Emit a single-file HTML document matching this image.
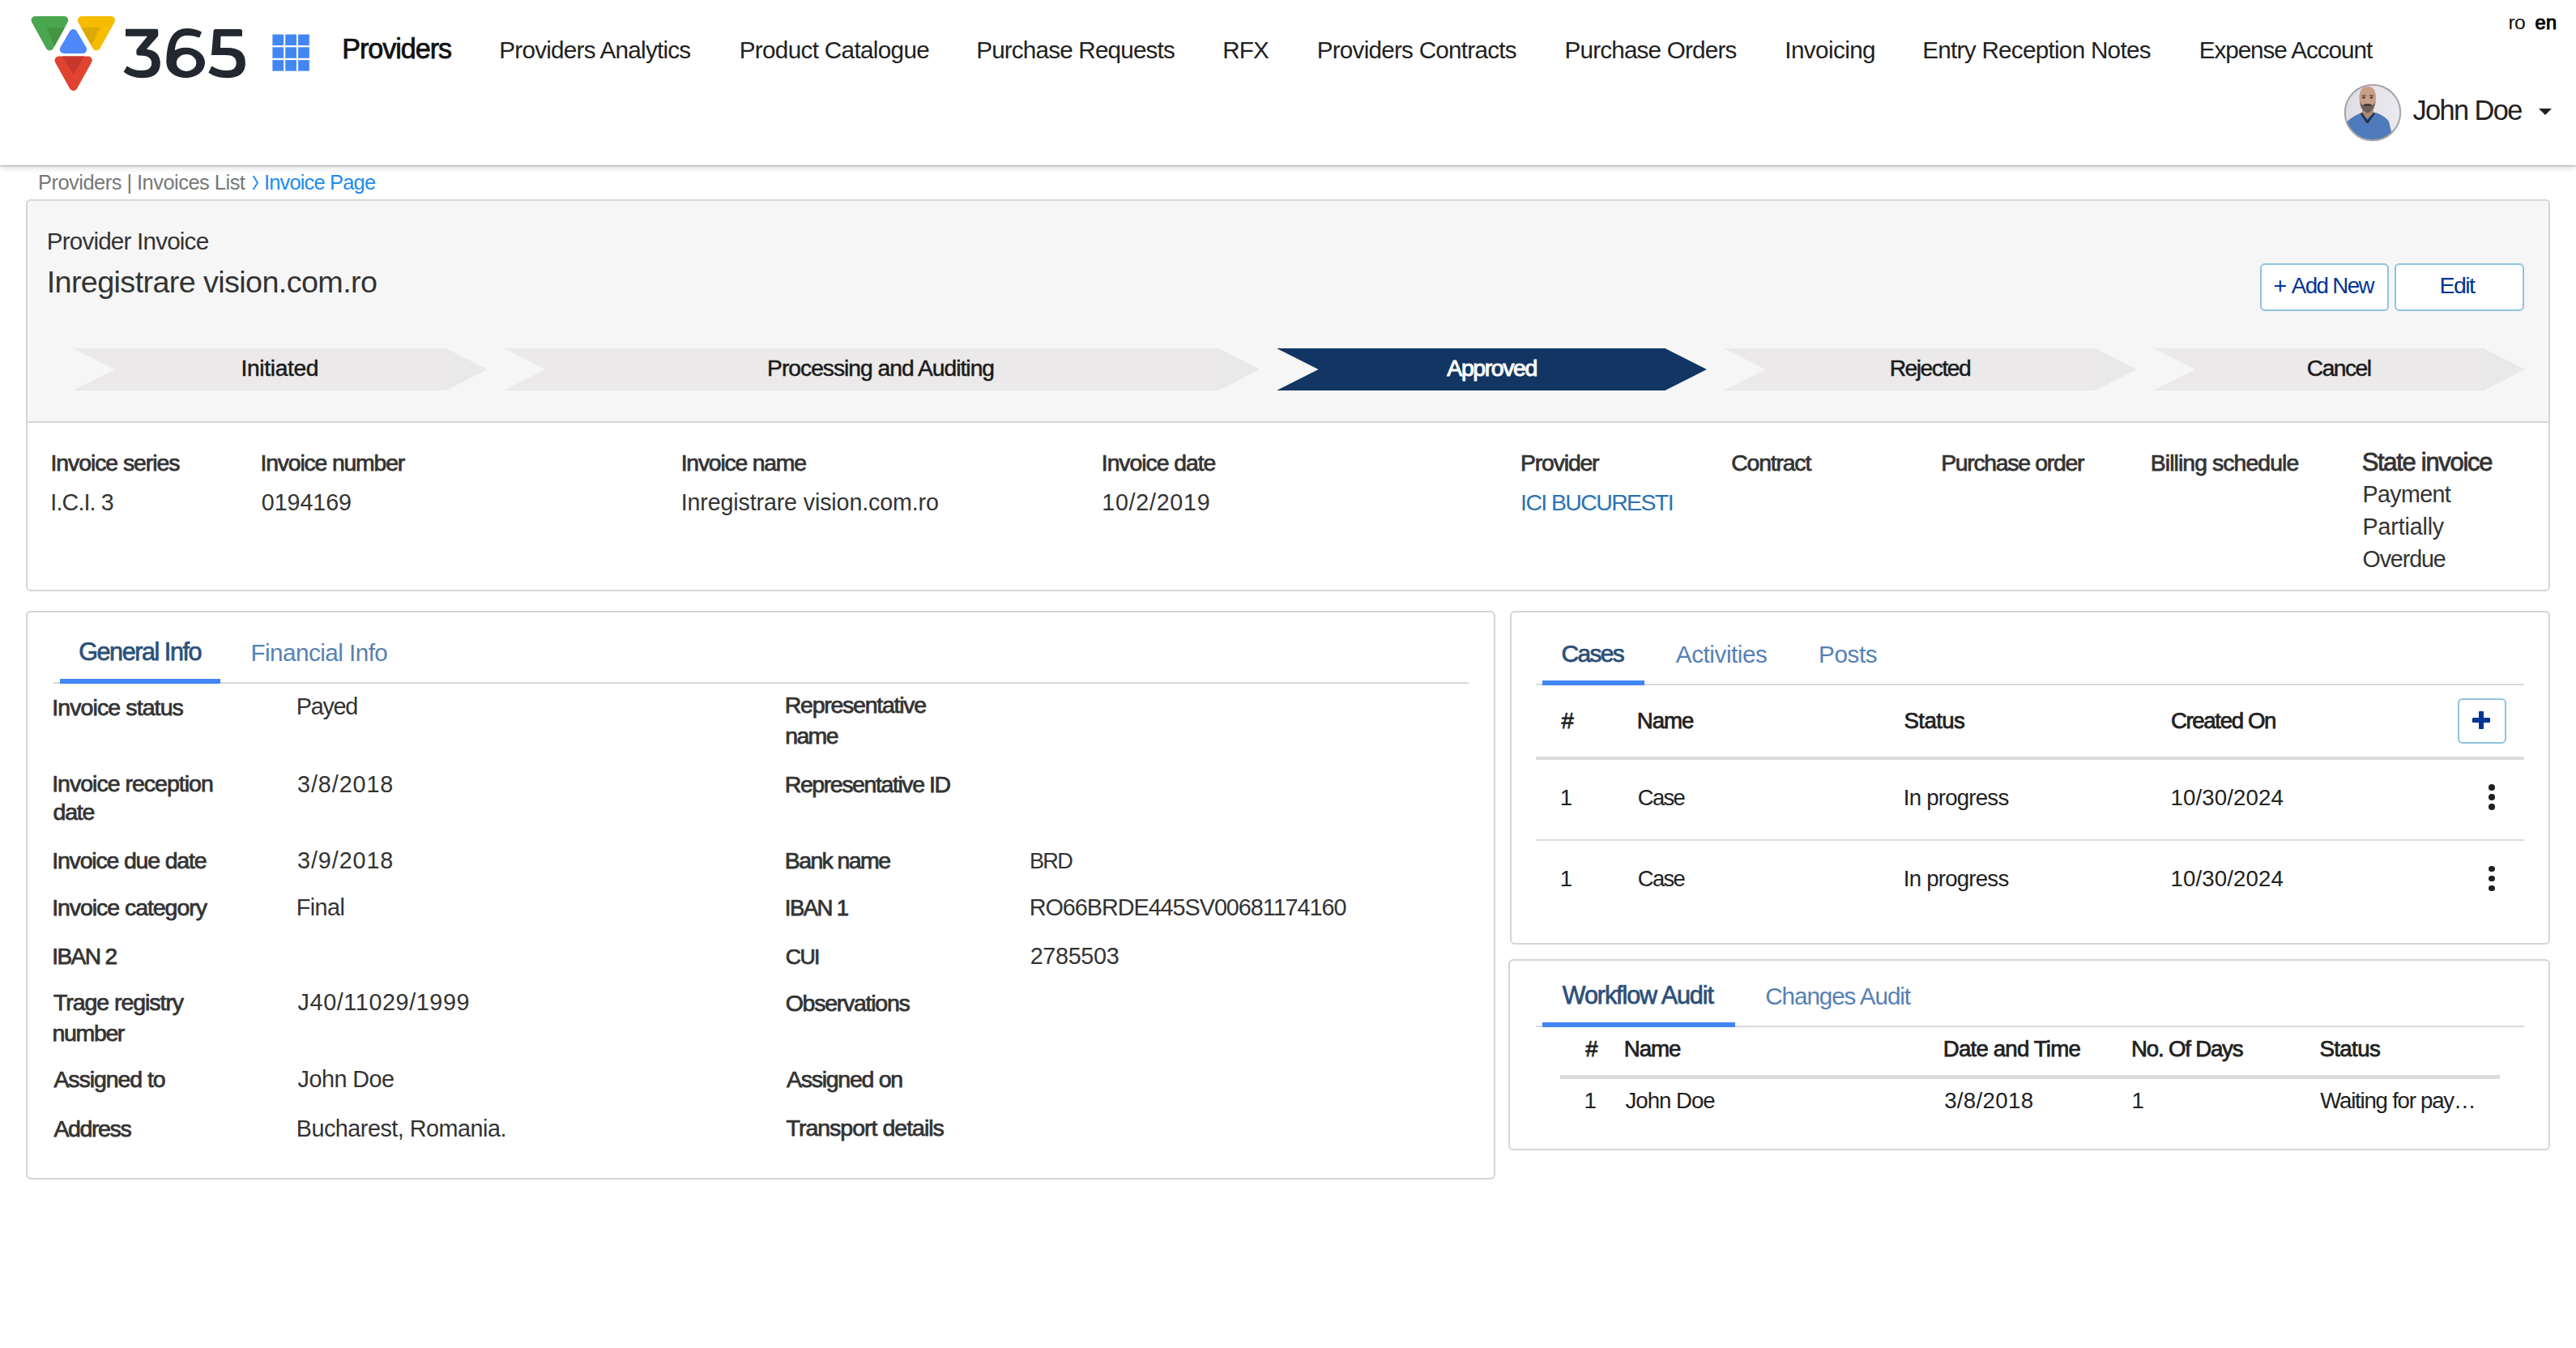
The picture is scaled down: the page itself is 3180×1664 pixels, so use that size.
<!DOCTYPE html>
<html lang="en"><head><meta charset="utf-8"><title>Invoice Page</title>
<style>
html,body{margin:0;padding:0;background:#fff}
body{width:3180px;height:1664px;position:relative;overflow:hidden;font-family:"Liberation Sans",sans-serif}
.t{position:absolute;white-space:pre;z-index:3}
</style></head><body>
<div id="hdr" style="position:absolute;left:0;top:0;width:3180px;height:204px;background:#fff;box-shadow:0 1px 2px rgba(0,0,0,.27),0 3px 8px rgba(0,0,0,.14);z-index:1"></div>
<svg style="position:absolute;left:0;top:0;z-index:2" width="320" height="120" viewBox="0 0 320 120">
<g stroke-linejoin="round">
<polygon points="43.6,25 79.2,25 61.4,57.3" fill="#4aa74f" stroke="#4aa74f" stroke-width="10"/>
<polygon points="100.9,25 137,25 119,57.3" fill="#f5bc00" stroke="#f5bc00" stroke-width="10"/>
<path d="M57.7,34 L80,34 L67.6,56.5 Q67,57.3 66.3,56 Z" fill="#43963f"/>
<path d="M100.2,34 L122,34 Q123.5,34.5 122.8,36 L112.6,55.8 Z" fill="#dfa903"/>
<polygon points="90.4,41 102.2,61 78.8,61" fill="#4f88f8" stroke="#4f88f8" stroke-width="10"/>
<polygon points="72.5,74.6 108.7,74.6 90.6,107" fill="#e0432f" stroke="#e0432f" stroke-width="10"/>
<path d="M76.7,69.6 L104,69.6 L91.3,90.4 Q90.4,91.6 89.5,90.4 Z" fill="#c8372e"/>
</g>
<g fill="#23272f">
<path d="M155,35.7 H193 Q195.3,35.7 195.3,38 V43.3 Q195.3,44.3 194.5,45.2 L180.8,60.7 Q197.8,62.5 197.8,78.2 Q197.8,96.2 175,96.2 Q162,96.2 152.6,88.7 L156.8,81.4 Q164.5,87 174.5,87 Q187.2,87 187.2,77.8 Q187.2,68.4 172.5,68.4 H171 Q168.4,68.4 168.4,65.5 V62.8 Q168.4,61.3 169.5,60.1 L182,44.8 H155 Z"/>
<path d="M249,39.4 Q241,34.9 231,34.9 C212,34.9 205.5,52 205.5,77.5 L218,77.5 Q216,70 215.8,63.8 Q216.5,43.8 231.5,43.8 Q239,43.8 246.2,46.6 Z"/>
<path fill-rule="evenodd" d="M205.5,77.5 A23.75,18.7 0 1 0 253,77.5 A23.75,18.7 0 1 0 205.5,77.5 Z M217.9,77.5 A12.2,10.4 0 1 0 242.3,77.5 A12.2,10.4 0 1 0 217.9,77.5 Z"/>
<path d="M263.6,38.2 Q263.8,36 266,36 H297 Q299,36 299,38.5 V44.8 H272.5 L272,59.1 H281 Q302.9,59.1 302.9,78 Q302.9,96.2 280,96.2 Q267,96.2 257.4,89.7 L261.3,81.4 Q270,87.1 280,87.1 Q291.7,87.1 291.7,77.6 Q291.7,67.9 279,67.9 H261 Z"/>
</g>
</svg>
<svg style="position:absolute;left:0;top:0;z-index:2" width="400" height="100"><rect x="336.40" y="42.50" width="13.7" height="13.5" fill="#4286f4"/><rect x="336.40" y="58.30" width="13.7" height="13.5" fill="#4286f4"/><rect x="336.40" y="74.10" width="13.7" height="13.5" fill="#4286f4"/><rect x="352.25" y="42.50" width="13.7" height="13.5" fill="#4286f4"/><rect x="352.25" y="58.30" width="13.7" height="13.5" fill="#4286f4"/><rect x="352.25" y="74.10" width="13.7" height="13.5" fill="#4286f4"/><rect x="368.10" y="42.50" width="13.7" height="13.5" fill="#4286f4"/><rect x="368.10" y="58.30" width="13.7" height="13.5" fill="#4286f4"/><rect x="368.10" y="74.10" width="13.7" height="13.5" fill="#4286f4"/></svg>
<svg style="position:absolute;left:2890px;top:100px;z-index:2" width="80" height="80" viewBox="2890 100 80 80">
<defs><clipPath id="av"><circle cx="2929" cy="139" r="34"/></clipPath>
<linearGradient id="avbg" x1="0" x2="1" y1="0" y2="0"><stop offset="0" stop-color="#dedde6"/><stop offset="1" stop-color="#ebebf0"/></linearGradient></defs>
<g clip-path="url(#av)">
<rect x="2890" y="100" width="80" height="80" fill="url(#avbg)"/>
<path d="M2917,134 L2929,134 L2931,141 L2922,150 L2915,141 Z" fill="#b08a74"/>
<path d="M2896,152 Q2900,146 2913,140 L2922,146 L2933,139 Q2944,143 2949,150 L2953,166 L2952,180 L2893,180 Z" fill="#4f7bbc"/>
<path d="M2913.5,140 L2921.5,152 L2923.5,152 L2932.5,139.5 L2930,139 L2922.5,148.5 L2916,139 Z" fill="#223152"/>
<path d="M2912.5,121 Q2912.5,107 2922.8,106.8 Q2933,107 2933,121 Q2933,128 2931,133 Q2928,139 2922.8,139 Q2917.5,139 2914.5,133 Q2912.5,128 2912.5,121 Z" fill="#c79e86"/>
<path d="M2913.3,125 Q2914,137 2922.8,139.5 Q2931.5,137 2932.3,125 Q2930,131 2927.5,129 Q2922.8,127 2918,129 Q2915.5,131 2913.3,125 Z" fill="#6a615c"/>
<path d="M2918,129.3 Q2922.8,127.3 2927.6,129.3 L2927,131 Q2922.8,129.8 2918.6,131 Z" fill="#3a302c"/>
<ellipse cx="2918" cy="120.6" rx="2" ry="1.1" fill="#3b2f2a"/>
<ellipse cx="2927.4" cy="120.6" rx="2" ry="1.1" fill="#3b2f2a"/>
<path d="M2915.5,118.2 L2920.5,117.8 M2925,117.8 L2930,118.2" stroke="#5a463c" stroke-width="1.2"/>
</g>
<circle cx="2929" cy="139" r="34.2" fill="none" stroke="#a3a3a3" stroke-width="2"/>
</svg>
<svg style="position:absolute;left:3130px;top:128px;z-index:2" width="25" height="20" viewBox="3130 128 25 20"><polygon points="3134,134 3150,134 3142,142" fill="#212121"/></svg>
<svg style="position:absolute;left:305px;top:210px" width="20" height="30" viewBox="305 210 20 30"><polyline points="313,217.8 318,225.6 313,233.4" fill="none" stroke="#1d8cf0" stroke-width="1.9" stroke-linecap="round" stroke-linejoin="round"/></svg>
<div style="position:absolute;left:32px;top:246px;width:3112px;height:480px;border:2px solid #d5d5d5;border-radius:6px;background:linear-gradient(#f6f6f6 0,#f6f6f6 272px,#d5d5d5 272px,#d5d5d5 274px,#fff 274px)"></div>
<div style="position:absolute;left:2790px;top:325px;width:155px;height:55px;border:2px solid #8fc3df;border-radius:6px;background:#fff"></div>
<div style="position:absolute;left:2956px;top:325px;width:156px;height:55px;border:2px solid #8fc3df;border-radius:6px;background:#fff"></div>
<svg style="position:absolute;left:0;top:0" width="3180" height="500"><polygon points="90,430 550.1,430 601.6,456 550.1,482 90,482 141.5,456" fill="#ebe9ea"/><polygon points="550.1,430 601.6,456 550.1,482" fill="#e9e9e9"/><polygon points="622,430 1503.5,430 1555,456 1503.5,482 622,482 673.5,456" fill="#ebe9ea"/><polygon points="1503.5,430 1555,456 1503.5,482" fill="#e9e9e9"/><polygon points="1576,430 2055.5,430 2107,456 2055.5,482 1576,482 1627.5,456" fill="#133563"/><polygon points="2128,430 2585.9,430 2637.4,456 2585.9,482 2128,482 2179.5,456" fill="#ebe9ea"/><polygon points="2585.9,430 2637.4,456 2585.9,482" fill="#e9e9e9"/><polygon points="2658.4,430 3065.5,430 3117,456 3065.5,482 2658.4,482 2709.9,456" fill="#ebe9ea"/><polygon points="3065.5,430 3117,456 3065.5,482" fill="#e9e9e9"/></svg>
<div style="position:absolute;left:32px;top:754px;width:1810px;height:698px;border:2px solid #d5d5d5;border-radius:6px;background:#fff"></div>
<div style="position:absolute;left:1864px;top:754px;width:1280px;height:408px;border:2px solid #d5d5d5;border-radius:6px;background:#fff"></div>
<div style="position:absolute;left:1862px;top:1184px;width:1282px;height:232px;border:2px solid #d5d5d5;border-radius:6px;background:#fff"></div>
<div style="position:absolute;left:66px;top:842px;width:1747px;height:2px;background:#d9d9d9"></div>
<div style="position:absolute;left:74px;top:838px;width:198px;height:6px;background:#4285f4"></div>
<div style="position:absolute;left:1896px;top:844px;width:1220px;height:2px;background:#d9d9d9"></div>
<div style="position:absolute;left:1904px;top:840px;width:126px;height:6px;background:#4285f4"></div>
<div style="position:absolute;left:1896px;top:1266px;width:1220px;height:2px;background:#d9d9d9"></div>
<div style="position:absolute;left:1904px;top:1262px;width:238px;height:6px;background:#4285f4"></div>
<div style="position:absolute;left:1896px;top:934px;width:1220px;height:4px;background:#dcdcdc"></div>
<div style="position:absolute;left:1896px;top:1036px;width:1220px;height:2px;background:#dcdcdc"></div>
<div style="position:absolute;left:3034px;top:862px;width:56px;height:52px;border:2px solid #8fc3df;border-radius:6px;background:#fff"></div>
<div style="position:absolute;left:3052px;top:886px;width:22px;height:5.8px;border-radius:1px;background:#003594"></div>
<div style="position:absolute;left:3060.1px;top:878px;width:5.8px;height:22px;border-radius:1px;background:#003594"></div>
<div style="position:absolute;left:3072.15px;top:968.20px;width:7.7px;height:7.6px;border-radius:50%;background:#212121"></div>
<div style="position:absolute;left:3072.15px;top:980.20px;width:7.7px;height:7.6px;border-radius:50%;background:#212121"></div>
<div style="position:absolute;left:3072.15px;top:992.20px;width:7.7px;height:7.6px;border-radius:50%;background:#212121"></div>
<div style="position:absolute;left:3072.15px;top:1068.50px;width:7.7px;height:7.6px;border-radius:50%;background:#212121"></div>
<div style="position:absolute;left:3072.15px;top:1080.50px;width:7.7px;height:7.6px;border-radius:50%;background:#212121"></div>
<div style="position:absolute;left:3072.15px;top:1092.50px;width:7.7px;height:7.6px;border-radius:50%;background:#212121"></div>
<div style="position:absolute;left:1926px;top:1326.5px;width:1160px;height:5px;background:#dcdcdc"></div>
<div class="t" style="left:422.33px;top:43.01px;font-size:34.16px;line-height:34.16px;letter-spacing:-1.066px;color:#111111;-webkit-text-stroke:0.75px #111111;">Providers</div>
<div class="t" style="left:616.28px;top:47.31px;font-size:29.65px;line-height:29.65px;letter-spacing:-0.749px;color:#212121;">Providers Analytics</div>
<div class="t" style="left:912.68px;top:47.31px;font-size:29.65px;line-height:29.65px;letter-spacing:-0.656px;color:#212121;">Product Catalogue</div>
<div class="t" style="left:1205.18px;top:47.31px;font-size:29.65px;line-height:29.65px;letter-spacing:-0.814px;color:#212121;">Purchase Requests</div>
<div class="t" style="left:1509.18px;top:47.31px;font-size:29.65px;line-height:29.65px;letter-spacing:-0.784px;color:#212121;">RFX</div>
<div class="t" style="left:1625.68px;top:47.31px;font-size:29.65px;line-height:29.65px;letter-spacing:-0.745px;color:#212121;">Providers Contracts</div>
<div class="t" style="left:1931.48px;top:47.31px;font-size:29.65px;line-height:29.65px;letter-spacing:-0.798px;color:#212121;">Purchase Orders</div>
<div class="t" style="left:2203.28px;top:47.31px;font-size:29.65px;line-height:29.65px;letter-spacing:-0.581px;color:#212121;">Invoicing</div>
<div class="t" style="left:2373.28px;top:47.31px;font-size:29.65px;line-height:29.65px;letter-spacing:-0.716px;color:#212121;">Entry Reception Notes</div>
<div class="t" style="left:2714.68px;top:47.31px;font-size:29.65px;line-height:29.65px;letter-spacing:-1.039px;color:#212121;">Expense Account</div>
<div class="t" style="left:3096.46px;top:15.91px;font-size:24.71px;line-height:24.71px;letter-spacing:-0.725px;color:#111111;">ro</div>
<div class="t" style="left:3129.56px;top:16.90px;font-size:23.55px;line-height:23.55px;letter-spacing:0.367px;color:#000000;-webkit-text-stroke:1.0px #000000;">en</div>
<div class="t" style="left:2978.46px;top:118.50px;font-size:34.37px;line-height:34.37px;letter-spacing:-1.600px;color:#212121;">John Doe</div>
<div class="t" style="left:47.01px;top:213.30px;font-size:25.44px;line-height:25.44px;letter-spacing:-0.510px;color:#777777;">Providers | Invoices List</div>
<div class="t" style="left:326.01px;top:213.30px;font-size:25.44px;line-height:25.44px;letter-spacing:-0.822px;color:#1d8cf0;">Invoice Page</div>
<div class="t" style="left:57.68px;top:283.31px;font-size:29.65px;line-height:29.65px;letter-spacing:-0.805px;color:#333333;">Provider Invoice</div>
<div class="t" style="left:57.65px;top:329.51px;font-size:37.79px;line-height:37.79px;letter-spacing:-0.630px;color:#333333;">Inregistrare vision.com.ro</div>
<div class="t" style="left:2806.56px;top:338.42px;font-size:28.49px;line-height:28.49px;letter-spacing:0.000px;color:#003594;">+</div>
<div class="t" style="left:2828.80px;top:339.41px;font-size:27.67px;line-height:27.67px;letter-spacing:-1.600px;color:#003594;">Add New</div>
<div class="t" style="left:3011.47px;top:338.42px;font-size:28.49px;line-height:28.49px;letter-spacing:-1.554px;color:#003594;">Edit</div>
<div class="t" style="left:297.47px;top:440.20px;font-size:28.20px;line-height:28.20px;letter-spacing:-0.340px;color:#1a1a1a;-webkit-text-stroke:0.5px #1a1a1a;">Initiated</div>
<div class="t" style="left:947.10px;top:440.31px;font-size:28.20px;line-height:28.20px;letter-spacing:-0.978px;color:#1a1a1a;-webkit-text-stroke:0.5px #1a1a1a;">Processing and Auditing</div>
<div class="t" style="left:1786.32px;top:440.21px;font-size:28.49px;line-height:28.49px;letter-spacing:-1.427px;color:#ffffff;-webkit-text-stroke:1.0px #ffffff;">Approved</div>
<div class="t" style="left:2332.75px;top:440.11px;font-size:28.20px;line-height:28.20px;letter-spacing:-1.486px;color:#1a1a1a;-webkit-text-stroke:0.5px #1a1a1a;">Rejected</div>
<div class="t" style="left:2847.85px;top:440.20px;font-size:28.20px;line-height:28.20px;letter-spacing:-1.507px;color:#1a1a1a;-webkit-text-stroke:0.5px #1a1a1a;">Cancel</div>
<div class="t" style="left:62.39px;top:556.51px;font-size:28.34px;line-height:28.34px;letter-spacing:-1.008px;color:#333333;-webkit-text-stroke:0.75px #333333;">Invoice series</div>
<div class="t" style="left:321.49px;top:556.51px;font-size:28.34px;line-height:28.34px;letter-spacing:-1.153px;color:#333333;-webkit-text-stroke:0.75px #333333;">Invoice number</div>
<div class="t" style="left:840.69px;top:556.51px;font-size:28.34px;line-height:28.34px;letter-spacing:-1.203px;color:#333333;-webkit-text-stroke:0.75px #333333;">Invoice name</div>
<div class="t" style="left:1359.79px;top:556.51px;font-size:28.34px;line-height:28.34px;letter-spacing:-1.025px;color:#333333;-webkit-text-stroke:0.75px #333333;">Invoice date</div>
<div class="t" style="left:1877.09px;top:556.51px;font-size:28.34px;line-height:28.34px;letter-spacing:-1.144px;color:#333333;-webkit-text-stroke:0.75px #333333;">Provider</div>
<div class="t" style="left:2137.27px;top:556.51px;font-size:28.34px;line-height:28.34px;letter-spacing:-1.153px;color:#333333;-webkit-text-stroke:0.75px #333333;">Contract</div>
<div class="t" style="left:2396.19px;top:556.51px;font-size:28.34px;line-height:28.34px;letter-spacing:-1.269px;color:#333333;-webkit-text-stroke:0.75px #333333;">Purchase order</div>
<div class="t" style="left:2654.79px;top:556.51px;font-size:28.34px;line-height:28.34px;letter-spacing:-0.899px;color:#333333;-webkit-text-stroke:0.75px #333333;">Billing schedule</div>
<div class="t" style="left:2915.63px;top:555.91px;font-size:30.96px;line-height:30.96px;letter-spacing:-1.278px;color:#333333;-webkit-text-stroke:0.8px #333333;">State invoice</div>
<div class="t" style="left:62.36px;top:606.01px;font-size:28.63px;line-height:28.63px;letter-spacing:-0.848px;color:#333333;">I.C.I. 3</div>
<div class="t" style="left:322.81px;top:606.01px;font-size:28.63px;line-height:28.63px;letter-spacing:-0.036px;color:#333333;">0194169</div>
<div class="t" style="left:840.66px;top:606.01px;font-size:28.63px;line-height:28.63px;letter-spacing:-0.126px;color:#333333;">Inregistrare vision.com.ro</div>
<div class="t" style="left:1360.21px;top:606.01px;font-size:28.63px;line-height:28.63px;letter-spacing:0.758px;color:#333333;">10/2/2019</div>
<div class="t" style="left:1877.08px;top:606.01px;font-size:28.46px;line-height:28.46px;letter-spacing:-1.600px;color:#2b72b4;">ICI BUCURESTI</div>
<div class="t" style="left:2916.56px;top:595.91px;font-size:28.63px;line-height:28.63px;letter-spacing:-0.643px;color:#333333;">Payment</div>
<div class="t" style="left:2916.56px;top:635.91px;font-size:28.63px;line-height:28.63px;letter-spacing:-0.150px;color:#333333;">Partially</div>
<div class="t" style="left:2916.46px;top:675.91px;font-size:28.63px;line-height:28.63px;letter-spacing:-1.087px;color:#333333;">Overdue</div>
<div class="t" style="left:97.27px;top:789.31px;font-size:30.52px;line-height:30.52px;letter-spacing:-1.429px;color:#2c5079;-webkit-text-stroke:0.75px #2c5079;">General Info</div>
<div class="t" style="left:309.48px;top:791.01px;font-size:29.65px;line-height:29.65px;letter-spacing:-0.534px;color:#5581b5;">Financial Info</div>
<div class="t" style="left:64.17px;top:858.71px;font-size:28.49px;line-height:28.49px;letter-spacing:-0.882px;color:#333333;-webkit-text-stroke:0.75px #333333;">Invoice status</div>
<div class="t" style="left:365.75px;top:857.91px;font-size:28.78px;line-height:28.78px;letter-spacing:-1.238px;color:#333333;">Payed</div>
<div class="t" style="left:968.77px;top:856.42px;font-size:28.49px;line-height:28.49px;letter-spacing:-1.246px;color:#333333;-webkit-text-stroke:0.75px #333333;">Representative</div>
<div class="t" style="left:969.22px;top:893.90px;font-size:28.40px;line-height:28.40px;letter-spacing:-1.600px;color:#333333;-webkit-text-stroke:0.75px #333333;">name</div>
<div class="t" style="left:64.17px;top:952.62px;font-size:28.49px;line-height:28.49px;letter-spacing:-0.980px;color:#333333;-webkit-text-stroke:0.75px #333333;">Invoice reception</div>
<div class="t" style="left:65.51px;top:988.01px;font-size:28.49px;line-height:28.49px;letter-spacing:-1.161px;color:#333333;-webkit-text-stroke:0.75px #333333;">date</div>
<div class="t" style="left:367.10px;top:953.80px;font-size:28.78px;line-height:28.78px;letter-spacing:0.888px;color:#333333;">3/8/2018</div>
<div class="t" style="left:968.77px;top:954.21px;font-size:28.49px;line-height:28.49px;letter-spacing:-1.411px;color:#333333;-webkit-text-stroke:0.75px #333333;">Representative ID</div>
<div class="t" style="left:64.17px;top:1048.01px;font-size:28.49px;line-height:28.49px;letter-spacing:-1.174px;color:#333333;-webkit-text-stroke:0.75px #333333;">Invoice due date</div>
<div class="t" style="left:367.10px;top:1048.01px;font-size:28.78px;line-height:28.78px;letter-spacing:0.888px;color:#333333;">3/9/2018</div>
<div class="t" style="left:968.78px;top:1048.01px;font-size:28.47px;line-height:28.47px;letter-spacing:-1.600px;color:#333333;-webkit-text-stroke:0.75px #333333;">Bank name</div>
<div class="t" style="left:1270.88px;top:1049.01px;font-size:27.12px;line-height:27.12px;letter-spacing:-1.600px;color:#333333;">BRD</div>
<div class="t" style="left:64.17px;top:1106.21px;font-size:28.49px;line-height:28.49px;letter-spacing:-1.046px;color:#333333;-webkit-text-stroke:0.75px #333333;">Invoice category</div>
<div class="t" style="left:365.75px;top:1106.21px;font-size:28.78px;line-height:28.78px;letter-spacing:-0.558px;color:#333333;">Final</div>
<div class="t" style="left:968.85px;top:1107.01px;font-size:27.55px;line-height:27.55px;letter-spacing:-1.600px;color:#333333;-webkit-text-stroke:0.75px #333333;">IBAN 1</div>
<div class="t" style="left:1270.75px;top:1106.01px;font-size:28.78px;line-height:28.78px;letter-spacing:-1.022px;color:#333333;">RO66BRDE445SV00681174160</div>
<div class="t" style="left:64.20px;top:1167.31px;font-size:28.11px;line-height:28.11px;letter-spacing:-1.600px;color:#333333;-webkit-text-stroke:0.75px #333333;">IBAN 2</div>
<div class="t" style="left:969.75px;top:1168.21px;font-size:26.63px;line-height:26.63px;letter-spacing:-1.600px;color:#333333;-webkit-text-stroke:0.75px #333333;">CUI</div>
<div class="t" style="left:1271.65px;top:1166.21px;font-size:28.78px;line-height:28.78px;letter-spacing:-0.321px;color:#333333;">2785503</div>
<div class="t" style="left:65.95px;top:1222.62px;font-size:28.49px;line-height:28.49px;letter-spacing:-1.040px;color:#333333;-webkit-text-stroke:0.75px #333333;">Trage registry</div>
<div class="t" style="left:64.62px;top:1260.71px;font-size:28.49px;line-height:28.49px;letter-spacing:-1.367px;color:#333333;-webkit-text-stroke:0.75px #333333;">number</div>
<div class="t" style="left:367.55px;top:1223.41px;font-size:28.78px;line-height:28.78px;letter-spacing:0.601px;color:#333333;">J40/11029/1999</div>
<div class="t" style="left:969.66px;top:1224.31px;font-size:28.49px;line-height:28.49px;letter-spacing:-1.250px;color:#333333;-webkit-text-stroke:0.75px #333333;">Observations</div>
<div class="t" style="left:66.40px;top:1317.71px;font-size:28.49px;line-height:28.49px;letter-spacing:-1.066px;color:#333333;-webkit-text-stroke:0.75px #333333;">Assigned to</div>
<div class="t" style="left:367.55px;top:1317.71px;font-size:28.78px;line-height:28.78px;letter-spacing:-0.513px;color:#333333;">John Doe</div>
<div class="t" style="left:971.00px;top:1318.01px;font-size:28.49px;line-height:28.49px;letter-spacing:-1.257px;color:#333333;-webkit-text-stroke:0.75px #333333;">Assigned on</div>
<div class="t" style="left:66.40px;top:1378.62px;font-size:28.49px;line-height:28.49px;letter-spacing:-1.371px;color:#333333;-webkit-text-stroke:0.75px #333333;">Address</div>
<div class="t" style="left:365.75px;top:1378.60px;font-size:28.78px;line-height:28.78px;letter-spacing:-0.494px;color:#333333;">Bucharest, Romania.</div>
<div class="t" style="left:970.55px;top:1378.21px;font-size:28.49px;line-height:28.49px;letter-spacing:-0.986px;color:#333333;-webkit-text-stroke:0.75px #333333;">Transport details</div>
<div class="t" style="left:1927.40px;top:792.01px;font-size:29.93px;line-height:29.93px;letter-spacing:-1.600px;color:#2c5079;-webkit-text-stroke:0.75px #2c5079;">Cases</div>
<div class="t" style="left:2068.80px;top:793.31px;font-size:29.65px;line-height:29.65px;letter-spacing:-0.429px;color:#5581b5;">Activities</div>
<div class="t" style="left:2244.98px;top:793.31px;font-size:29.65px;line-height:29.65px;letter-spacing:-0.353px;color:#5581b5;">Posts</div>
<div class="t" style="left:1927.40px;top:875.51px;font-size:27.62px;line-height:27.62px;letter-spacing:0.000px;color:#212121;-webkit-text-stroke:0.75px #212121;">#</div>
<div class="t" style="left:2020.84px;top:875.51px;font-size:27.62px;line-height:27.62px;letter-spacing:-1.080px;color:#212121;-webkit-text-stroke:0.75px #212121;">Name</div>
<div class="t" style="left:2350.54px;top:875.51px;font-size:27.62px;line-height:27.62px;letter-spacing:-0.594px;color:#212121;-webkit-text-stroke:0.75px #212121;">Status</div>
<div class="t" style="left:2679.91px;top:875.51px;font-size:27.62px;line-height:27.62px;letter-spacing:-1.352px;color:#212121;-webkit-text-stroke:0.75px #212121;">Created On</div>
<div class="t" style="left:1925.67px;top:971.01px;font-size:27.62px;line-height:27.62px;letter-spacing:0.000px;color:#212121;">1</div>
<div class="t" style="left:2021.72px;top:971.00px;font-size:27.37px;line-height:27.37px;letter-spacing:-1.600px;color:#212121;">Case</div>
<div class="t" style="left:2349.84px;top:971.01px;font-size:27.62px;line-height:27.62px;letter-spacing:-0.776px;color:#212121;">In progress</div>
<div class="t" style="left:2679.47px;top:971.01px;font-size:27.62px;line-height:27.62px;letter-spacing:0.130px;color:#212121;">10/30/2024</div>
<div class="t" style="left:1925.67px;top:1071.21px;font-size:27.62px;line-height:27.62px;letter-spacing:0.000px;color:#212121;">1</div>
<div class="t" style="left:2021.72px;top:1071.22px;font-size:27.37px;line-height:27.37px;letter-spacing:-1.600px;color:#212121;">Case</div>
<div class="t" style="left:2349.84px;top:1071.21px;font-size:27.62px;line-height:27.62px;letter-spacing:-0.776px;color:#212121;">In progress</div>
<div class="t" style="left:2679.47px;top:1071.21px;font-size:27.62px;line-height:27.62px;letter-spacing:0.130px;color:#212121;">10/30/2024</div>
<div class="t" style="left:1928.80px;top:1212.51px;font-size:30.52px;line-height:30.52px;letter-spacing:-1.092px;color:#2c5079;-webkit-text-stroke:0.75px #2c5079;">Workflow Audit</div>
<div class="t" style="left:2179.31px;top:1215.01px;font-size:29.65px;line-height:29.65px;letter-spacing:-1.085px;color:#5581b5;">Changes Audit</div>
<div class="t" style="left:1957.30px;top:1281.01px;font-size:27.62px;line-height:27.62px;letter-spacing:0.000px;color:#212121;-webkit-text-stroke:0.75px #212121;">#</div>
<div class="t" style="left:2004.84px;top:1281.01px;font-size:27.62px;line-height:27.62px;letter-spacing:-1.080px;color:#212121;-webkit-text-stroke:0.75px #212121;">Name</div>
<div class="t" style="left:2398.84px;top:1281.01px;font-size:27.62px;line-height:27.62px;letter-spacing:-0.804px;color:#212121;-webkit-text-stroke:0.75px #212121;">Date and Time</div>
<div class="t" style="left:2631.04px;top:1281.01px;font-size:27.62px;line-height:27.62px;letter-spacing:-1.191px;color:#212121;-webkit-text-stroke:0.75px #212121;">No. Of Days</div>
<div class="t" style="left:2863.44px;top:1281.01px;font-size:27.62px;line-height:27.62px;letter-spacing:-0.594px;color:#212121;-webkit-text-stroke:0.75px #212121;">Status</div>
<div class="t" style="left:1955.57px;top:1344.71px;font-size:27.62px;line-height:27.62px;letter-spacing:0.000px;color:#212121;">1</div>
<div class="t" style="left:2006.57px;top:1344.71px;font-size:27.62px;line-height:27.62px;letter-spacing:-1.006px;color:#212121;">John Doe</div>
<div class="t" style="left:2400.14px;top:1344.71px;font-size:27.62px;line-height:27.62px;letter-spacing:0.345px;color:#212121;">3/8/2018</div>
<div class="t" style="left:2631.47px;top:1344.71px;font-size:27.62px;line-height:27.62px;letter-spacing:0.000px;color:#212121;">1</div>
<div class="t" style="left:2864.30px;top:1344.71px;font-size:27.62px;line-height:27.62px;letter-spacing:-1.232px;color:#212121;">Waiting for pay…</div>
</body></html>
